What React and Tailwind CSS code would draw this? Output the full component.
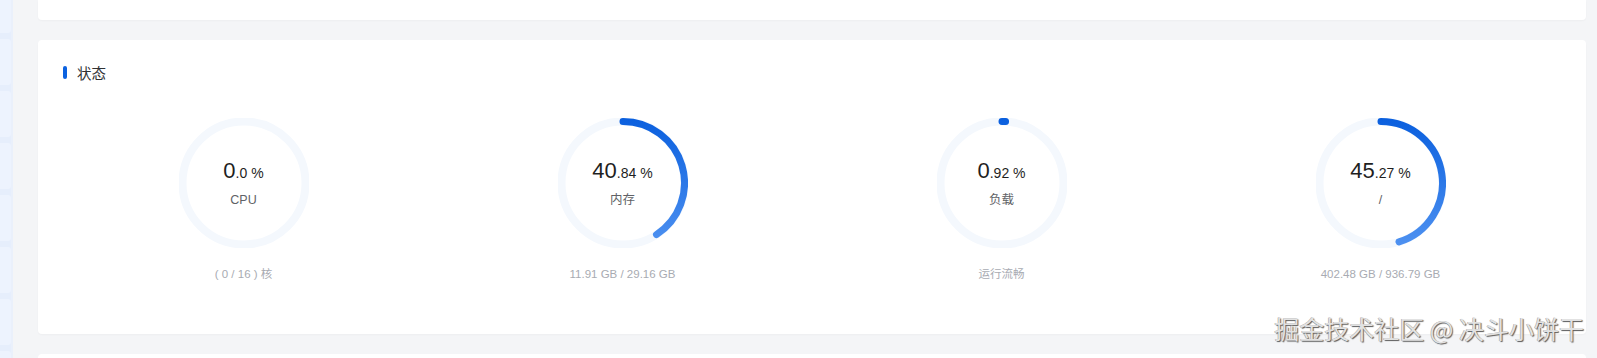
import React from "react";

const R = 61.5;

function arcPath(pct) {
  const a = (pct / 100) * 2 * Math.PI;
  const x = 65 + R * Math.sin(a);
  const y = 65 - R * Math.cos(a);
  const large = pct > 50 ? 1 : 0;
  return `M 65 ${65 - R} A ${R} ${R} 0 ${large} 1 ${x.toFixed(3)} ${y.toFixed(3)}`;
}

function Gauge({ id, intPart, decPart, label, sub, pct }) {
  return (
    <div className="flex flex-col items-center">
      <div className="grid h-[130px] w-[130px] place-items-center">
        <svg width="130" height="130" viewBox="0 0 130 130" className="[grid-area:1/1]">
          <defs>
            <linearGradient id={id} x1="0" y1="0" x2="0" y2="130" gradientUnits="userSpaceOnUse">
              <stop offset="0" stopColor="#0a5fde" />
              <stop offset="1" stopColor="#4f92f1" />
            </linearGradient>
          </defs>
          <circle cx="65" cy="65" r={R} fill="none" stroke="#f4f8fd" strokeWidth="8" />
          {pct > 0 && (
            <path
              d={arcPath(pct)}
              fill="none"
              stroke={`url(#${id})`}
              strokeWidth="7"
              strokeLinecap="round"
            />
          )}
        </svg>
        <div className="[grid-area:1/1] flex flex-col items-center">
          <div className="h-[26px] leading-[26px] text-[#1f1f1f]">
            <span className="text-[22px]">{intPart}</span>
            <span className="text-[14px]">.{decPart} %</span>
          </div>
          <div className="mt-[8px] h-[17px] text-[12.5px] leading-[17px] text-[#606266]">{label}</div>
        </div>
      </div>
      <div className="mt-[18px] h-[16px] text-[11.5px] leading-[16px] text-[#a8abb2]">{sub}</div>
    </div>
  );
}

export default function App() {
  const items = [33, 46, 46, 46, 46, 46, 46, 46];
  return (
    <div
      className="relative flex h-[358px] w-[1597px] overflow-hidden bg-[#f4f5f7]"
      style={{ fontFamily: '"Liberation Sans", "Noto Sans CJK SC", Arial, sans-serif' }}
    >
      <aside className="flex w-[13px] shrink-0 flex-col gap-[6px] border-r-[2px] border-[#eaf0fb] bg-[#e6eefc]">
        {items.map((h, i) => (
          <div
            key={i}
            className={`w-[11px] shrink-0 bg-[#edf3fe] ${i === 0 ? "h-[33px] rounded-br-[3px]" : "h-[46px] rounded-r-[3px]"}`}
          />
        ))}
      </aside>
      <main className="flex min-w-0 flex-1 flex-col gap-[20px] pl-[25px] pr-[11px]">
        <div className="h-[20px] shrink-0 rounded-b-[4px] bg-white shadow-[0_1px_2px_rgba(0,0,0,0.03)]" />
        <section className="h-[294px] shrink-0 rounded-[4px] bg-white shadow-[0_1px_2px_rgba(0,0,0,0.03)]">
          <div className="flex items-center gap-[10px] pl-[25px] pt-[24px]">
            <span className="h-[13px] w-[4px] rounded-[2px] bg-[#0c62e0]" />
            <span
              className="text-[14.5px] leading-[17px] font-normal text-[#303133]"
              style={{ fontFamily: '"Noto Sans CJK SC", sans-serif' }}
            >
              状态
            </span>
          </div>
          <div className="mt-[37px] grid grid-cols-4 px-[16px]">
            <Gauge id="g1" intPart="0" decPart="0" label="CPU" sub="( 0 / 16 ) 核" pct={0} />
            <Gauge id="g2" intPart="40" decPart="84" label="内存" sub="11.91 GB / 29.16 GB" pct={40.84} />
            <Gauge id="g3" intPart="0" decPart="92" label="负载" sub="运行流畅" pct={0.92} />
            <Gauge id="g4" intPart="45" decPart="27" label="/" sub="402.48 GB / 936.79 GB" pct={45.27} />
          </div>
        </section>
        <div className="flex-1 rounded-t-[4px] bg-white" />
      </main>
      <div
        className="absolute bottom-[17px] right-[13px] text-[25px] leading-none text-[#e2e2e2] [text-shadow:1px_1px_1px_#5a5a5a,-0.5px_-0.5px_0_#a0a0a0]"
        style={{ fontFamily: '"Noto Sans CJK SC", sans-serif' }}
      >
        掘金技术社区 @ 决斗小饼干
      </div>
    </div>
  );
}
